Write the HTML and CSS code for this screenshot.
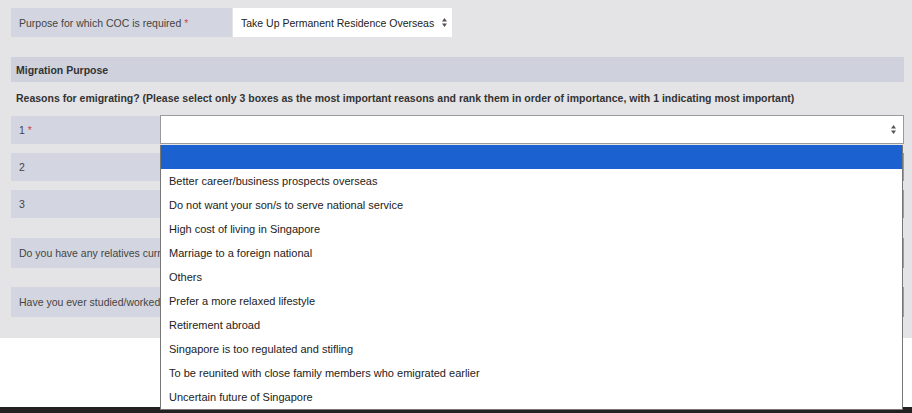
FILE: index.html
```html
<!DOCTYPE html>
<html lang="en">
<head>
    <meta charset="UTF-8">
    <meta name="viewport" content="width=device-width, initial-scale=1.0">
    <title>COC Application</title>
    <link rel="stylesheet" href="styles.css">
</head>
<body>
    <div class="page">
        <!-- Proposito -->
        <div class="row row-purpose">
            <div class="label label-purpose">Purpose for which COC is required <span class="req">*</span></div>
            <div class="select select-purpose">
                <span>Take Up Permanent Residence Overseas</span>
                <svg class="arrows" width="5" height="9" viewBox="0 0 5 9"><path d="M2.5 0L5 3.5H0zM2.5 9L0 5.5H5z" fill="#555"/></svg>
            </div>
        </div>

        <div class="section-title">Migration Purpose</div>
        <p class="question">Reasons for emigrating? (Please select only 3 boxes as the most important reasons and rank them in order of importance, with 1 indicating most important)</p>

        <div class="rank-rows">
            <div class="row">
                <div class="label label-rank">1 <span class="req">*</span></div>
                <div class="select select-rank open">
                    <span></span>
                    <svg class="arrows" width="5" height="9" viewBox="0 0 5 9"><path d="M2.5 0L5 3.5H0zM2.5 9L0 5.5H5z" fill="#555"/></svg>
                    <ul class="dropdown">
                        <li class="selected">&nbsp;</li>
                        <li>Better career/business prospects overseas</li>
                        <li>Do not want your son/s to serve national service</li>
                        <li>High cost of living in Singapore</li>
                        <li>Marriage to a foreign national</li>
                        <li>Others</li>
                        <li>Prefer a more relaxed lifestyle</li>
                        <li>Retirement abroad</li>
                        <li>Singapore is too regulated and stifling</li>
                        <li>To be reunited with close family members who emigrated earlier</li>
                        <li>Uncertain future of Singapore</li>
                    </ul>
                </div>
            </div>
            <div class="row">
                <div class="label label-rank">2</div>
                <div class="select select-rank"></div>
            </div>
            <div class="row">
                <div class="label label-rank">3</div>
                <div class="select select-rank"></div>
            </div>
        </div>

        <div class="other-rows">
            <div class="row row-tall">
                <div class="label label-wide">Do you have any relatives currently overseas?</div>
                <div class="select select-rank"></div>
            </div>
            <div class="row row-tall">
                <div class="label label-wide">Have you ever studied/worked overseas?</div>
                <div class="select select-rank"></div>
            </div>
        </div>
    </div>
    <div class="blank"></div>
    <div class="taskbar"></div>
</body>
</html>
```

FILE: styles.css
```css
body {
    margin: 0;
    font-family: "Liberation Sans", Arial, sans-serif;
    font-size: 10.5px;
    color: #333;
    background-color: #fff;
}
.page {
    background-color: #e4e4e6;
    height: 338px;
    box-sizing: border-box;
    padding: 8px 8px 0 11px;
}
.row {
    display: flex;
    height: 28px;
}
.label {
    background-color: #d3d6e0;
    color: #444;
    padding: 0 8px;
    display: flex;
    align-items: center;
    white-space: nowrap;
    overflow: hidden;
    box-sizing: border-box;
}
.req {
    color: #d0474a;
    margin-left: 3px;
}
.select {
    background-color: #fff;
    display: flex;
    align-items: center;
    justify-content: space-between;
    box-sizing: border-box;
    color: #222;
    white-space: nowrap;
}
.arrows {
    flex: none;
}
/* Fila del proposito */
.row-purpose {
    height: 29px;
}
.label-purpose {
    width: 221px;
}
.select-purpose {
    width: 219px;
    margin-left: 1px;
    padding: 0 5px 0 8px;
}
.section-title {
    margin-top: 20px;
    height: 25px;
    background-color: #cfd2dd;
    font-weight: bold;
    color: #333;
    padding-left: 5px;
    display: flex;
    align-items: center;
}
.question {
    margin: 0;
    height: 34px;
    line-height: 33px;
    padding-left: 5px;
    font-weight: bold;
    color: #333;
    white-space: nowrap;
}
.rank-rows {
    display: flex;
    flex-direction: column;
    gap: 9px;
}
.label-rank {
    width: 149px;
}
.label-wide {
    width: 300px;
}
.select-rank {
    flex: 1;
    position: relative;
    border: 1px solid #9a9a9a;
    padding: 0 7px 0 8px;
}
.select-rank.open {
    margin-top: -1px;
    height: 29px;
}
/* Lista desplegada */
.dropdown {
    position: absolute;
    top: 29px;
    left: -1px;
    right: 0;
    margin: 0;
    padding: 0;
    list-style: none;
    background-color: #fff;
    border: 1px solid #777;
    border-top: none;
    font-size: 11px;
    z-index: 10;
}
.dropdown li {
    height: 24px;
    line-height: 24px;
    padding-left: 8px;
    color: #222;
    white-space: nowrap;
}
.dropdown li.selected {
    background-color: #1b62d0;
}
.other-rows {
    margin-top: 20px;
    display: flex;
    flex-direction: column;
    gap: 19px;
}
.row-tall {
    height: 30px;
}
.blank {
    height: 69px;
}
.taskbar {
    height: 6px;
    background-color: #222;
}
```
